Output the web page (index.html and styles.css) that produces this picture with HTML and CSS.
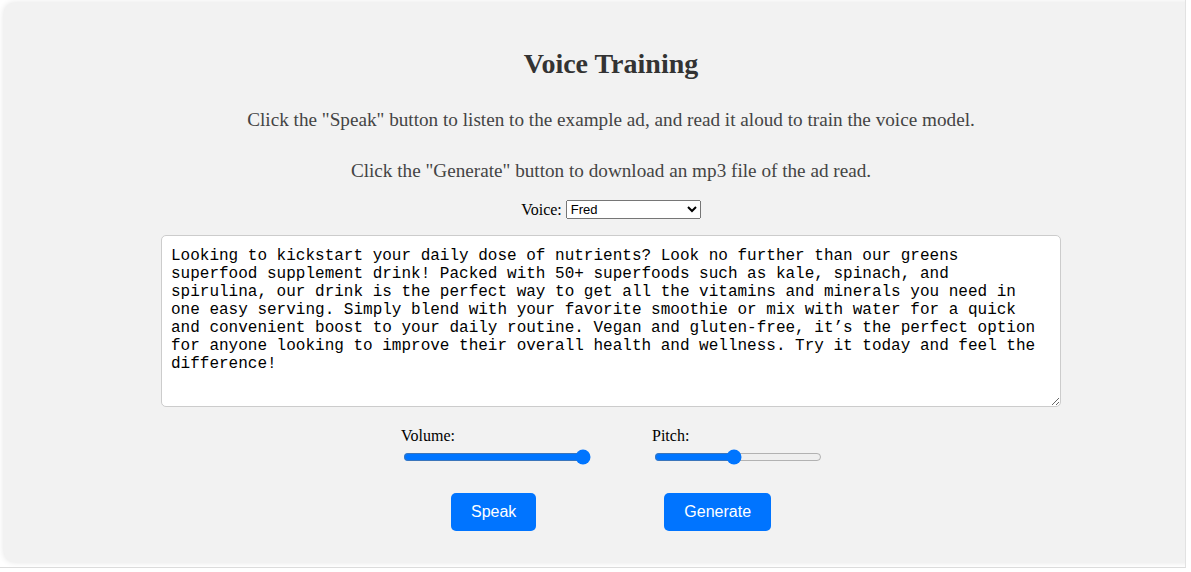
FILE: index.html
```html
<!DOCTYPE html>
<html lang="en">
<head>
<meta charset="utf-8">
<title>Voice Training</title>
<link rel="stylesheet" href="styles.css">
</head>
<body>
<div class="frame">
  <main class="card">
    <h1 class="title">Voice Training</h1>
    <p class="intro">Click the "Speak" button to listen to the example ad, and read it aloud to train the voice model.</p>
    <p class="intro">Click the "Generate" button to download an mp3 file of the ad read.</p>
    <div class="voice-row">
      <label class="voice-label" for="voice">Voice:</label>
      <select id="voice" class="voice-select">
        <option>Fred</option>
      </select>
    </div>
    <textarea class="ad-text" spellcheck="true">Looking to kickstart your daily dose of nutrients? Look no further than our greens superfood supplement drink! Packed with 50+ superfoods such as kale, spinach, and spirulina, our drink is the perfect way to get all the vitamins and minerals you need in one easy serving. Simply blend with your favorite smoothie or mix with water for a quick and convenient boost to your daily routine. Vegan and gluten-free, it’s the perfect option for anyone looking to improve their overall health and wellness. Try it today and feel the difference!</textarea>
    <div class="sliders">
      <div class="control">
        <label class="control-label" for="volume">Volume:</label>
        <input id="volume" class="range range-volume" type="range" min="0" max="1" step="0.1" value="1">
      </div>
      <div class="control">
        <label class="control-label" for="pitch">Pitch:</label>
        <input id="pitch" class="range range-pitch" type="range" min="0.1" max="2" step="0.1" value="1">
      </div>
    </div>
    <div class="buttons">
      <button class="btn">Speak</button>
      <button class="btn">Generate</button>
    </div>
  </main>
</div>
</body>
</html>
```
FILE: styles.css
```css
html, body {
  margin: 0;
  padding: 0;
  background: #ffffff;
  overflow: hidden;
}

.frame {
  width: 1186px;
  height: 568px;
  box-sizing: border-box;
  padding: 3px 0 0 4px;
  border-right: 1px solid #e2e2e2;
  border-bottom: 1px solid #dcdcdc;
  overflow: hidden;
  font-family: "Liberation Serif", "Times New Roman", serif;
}

.card {
  width: 1214px;
  box-sizing: border-box;
  background: #f2f2f2;
  border-radius: 10px;
  box-shadow: 0 0 6px rgba(0, 0, 0, 0.12);
  padding: 20px 0 31px;
  text-align: center;
}

.title {
  margin: 25px 0 30px;
  font-size: 28px;
  line-height: 31px;
  font-weight: bold;
  color: #333333;
}

.intro {
  margin: 0 0 30px;
  font-size: 19.2px;
  line-height: 21px;
  color: #444444;
}

.intro + .intro {
  margin-bottom: 18px;
}

.voice-row {
  display: flex;
  justify-content: center;
  align-items: center;
  gap: 4px;
  height: 21px;
  margin-bottom: 15px;
}

.voice-label {
  font-size: 16px;
  color: #000000;
}

.voice-select {
  width: 135px;
  height: 19px;
  font-family: "Liberation Sans", Arial, sans-serif;
  font-size: 13px;
}

.ad-text {
  display: block;
  width: 900px;
  height: 172px;
  box-sizing: border-box;
  margin: 0 auto;
  padding: 11px 9px 9px;
  border: 1px solid #cccccc;
  border-radius: 5px;
  background: #ffffff;
  font-family: "Liberation Mono", "Courier New", monospace;
  font-size: 16px;
  line-height: 18px;
  color: #000000;
}

.sliders {
  display: flex;
  justify-content: center;
  gap: 59px;
  margin-top: 20px;
  padding-left: 3px;
}

.control {
  display: flex;
  flex-direction: column;
  align-items: flex-start;
}

.control-label {
  font-size: 16px;
  line-height: 18px;
  color: #000000;
}

.range {
  margin: 4px 2px 2px;
}

.range-volume {
  width: 188px;
}

.range-pitch {
  width: 168px;
}

.buttons {
  display: flex;
  justify-content: center;
  gap: 128px;
  margin-top: 26px;
}

.btn {
  padding: 10px 20px;
  border: none;
  border-radius: 5px;
  background: #0074ff;
  color: #ffffff;
  font-family: "Liberation Sans", Arial, sans-serif;
  font-size: 16px;
  line-height: 18px;
  cursor: pointer;
}
```
